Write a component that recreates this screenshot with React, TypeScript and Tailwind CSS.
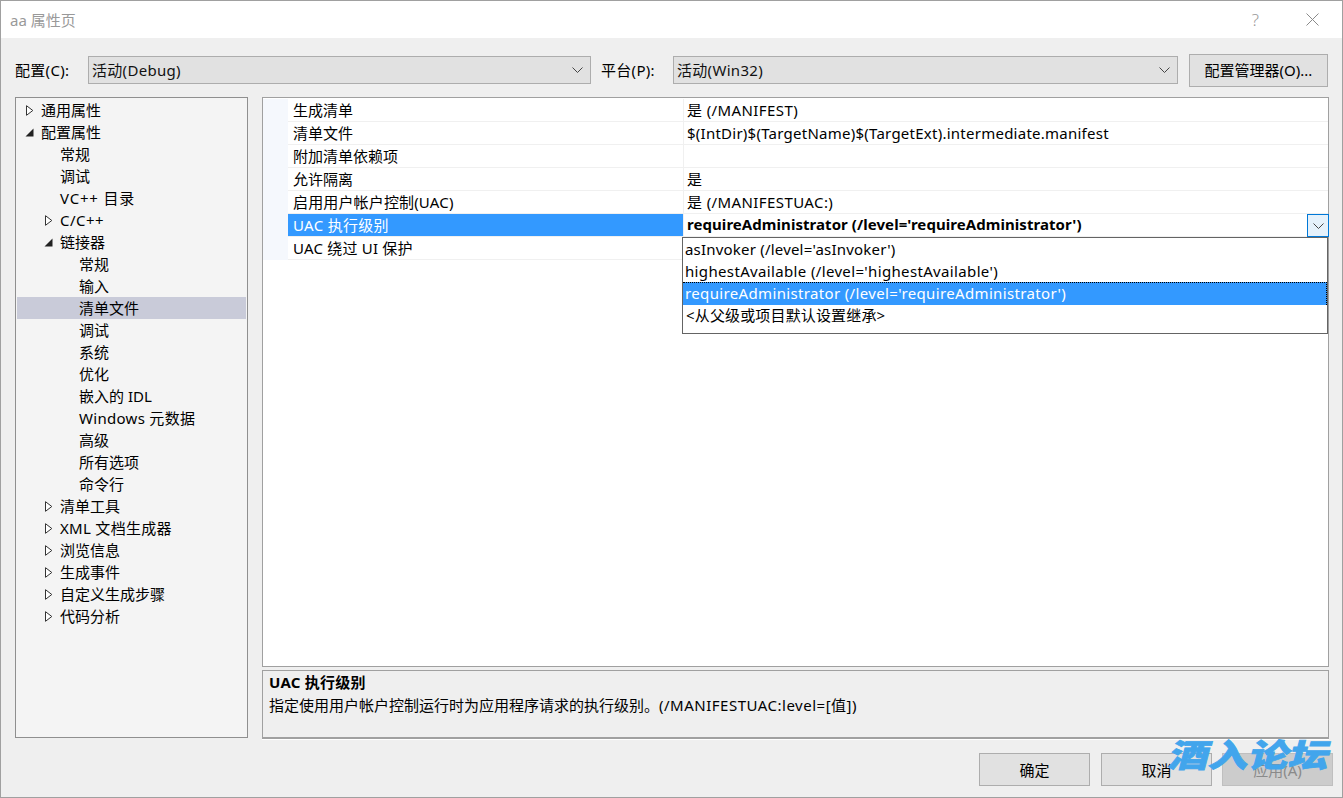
const FONT = "font-['Noto_Sans','Noto_Sans_CJK_SC',sans-serif]";

type TreeNode = { label: string; level: number; arrow?: "open" | "closed"; selected?: boolean; track?: string };

const tree: TreeNode[] = [
  { label: "通用属性", level: 0, arrow: "closed" },
  { label: "配置属性", level: 0, arrow: "open" },
  { label: "常规", level: 1 },
  { label: "调试", level: 1 },
  { label: "VC++ 目录", level: 1, track: "tracking-[0.8px]" },
  { label: "C/C++", level: 1, arrow: "closed", track: "tracking-[0.5px]" },
  { label: "链接器", level: 1, arrow: "open" },
  { label: "常规", level: 2 },
  { label: "输入", level: 2 },
  { label: "清单文件", level: 2, selected: true },
  { label: "调试", level: 2 },
  { label: "系统", level: 2 },
  { label: "优化", level: 2 },
  { label: "嵌入的 IDL", level: 2 },
  { label: "Windows 元数据", level: 2, track: "tracking-[0.3px]" },
  { label: "高级", level: 2 },
  { label: "所有选项", level: 2 },
  { label: "命令行", level: 2 },
  { label: "清单工具", level: 1, arrow: "closed" },
  { label: "XML 文档生成器", level: 1, arrow: "closed", track: "tracking-[0.3px]" },
  { label: "浏览信息", level: 1, arrow: "closed" },
  { label: "生成事件", level: 1, arrow: "closed" },
  { label: "自定义生成步骤", level: 1, arrow: "closed" },
  { label: "代码分析", level: 1, arrow: "closed" },
];

const props = [
  { name: "生成清单", value: "是 (/MANIFEST)", track: "tracking-[0.4px]" },
  { name: "清单文件", value: "$(IntDir)$(TargetName)$(TargetExt).intermediate.manifest", track: "tracking-[0.25px]" },
  { name: "附加清单依赖项", value: "" },
  { name: "允许隔离", value: "是" },
  { name: "启用用户帐户控制(UAC)", value: "是 (/MANIFESTUAC:)", track: "tracking-[0.4px]", nameTrack: "tracking-[0.15px]" },
  { name: "UAC 执行级别", value: "requireAdministrator (/level='requireAdministrator')", selected: true, track: "tracking-[0.06px]", nameTrack: "tracking-[0.3px]" },
  { name: "UAC 绕过 UI 保护", value: "", nameTrack: "tracking-[0.2px]" },
];

function Chevron({ className }: { className?: string }) {
  return (
    <svg width="11" height="6" viewBox="0 0 11 6" fill="none" className={className}>
      <path d="M0.5 0.5 L5.5 5.5 L10.5 0.5" stroke="#444" strokeWidth="1" />
    </svg>
  );
}

function TreeArrow({ kind }: { kind: "open" | "closed" }) {
  if (kind === "closed") {
    return (
      <svg width="8" height="11" viewBox="0 0 8 11" fill="none">
        <path d="M0.5 0.7 L6.8 5.5 L0.5 10.3 Z" stroke="#333" strokeWidth="1" fill="#fff" />
      </svg>
    );
  }
  return (
    <svg width="9" height="9" viewBox="0 0 9 9">
      <path d="M8.5 0.5 V8.5 H0.5 Z" fill="#222" />
    </svg>
  );
}

function Combo({ text, className }: { text: string; className: string }) {
  return (
    <div className={`h-[28px] flex items-center justify-between border border-[#adadad] bg-[#e1e1e1] pl-[3px] pr-[7px] text-[15px] text-[#111] ${className}`}>
      <span className="tracking-[0.3px]">{text}</span>
      <Chevron />
    </div>
  );
}

function DialogButton({ label, disabled, className }: { label: string; disabled?: boolean; className?: string }) {
  return (
    <div
      className={`w-[111px] h-[33px] flex items-center justify-center border text-[15px] ${
        disabled ? "border-[#bfbfbf] bg-[#cccccc] text-[#8a8a8a]" : "border-[#adadad] bg-[#e1e1e1] text-black"
      } ${className ?? ""}`}
    >
      {label}
    </div>
  );
}

export default function App() {
  return (
    <div className={`${FONT} relative w-[1343px] h-[798px] flex flex-col border border-[#a0a0a0] bg-[#efefef] text-[15px] leading-[22px] text-black overflow-hidden`}>
      {/* Title bar */}
      <div className="h-[37px] shrink-0 bg-white flex items-center justify-between pl-[9px] pr-[23px]">
        <span className="text-[#999999]">aa 属性页</span>
        <div className="flex items-center gap-[47px]">
          <span className="text-[#999999] text-[17px] font-light">?</span>
          <svg width="13" height="13" viewBox="0 0 13 13">
            <path d="M0.5 0.5 L12.5 12.5 M12.5 0.5 L0.5 12.5" stroke="#8a8a8a" strokeWidth="1" />
          </svg>
        </div>
      </div>

      {/* Config row */}
      <div className="h-[59px] shrink-0 flex items-center pt-[5px] pl-[14px] pr-[14px]">
        <span className="w-[73px] tracking-[0.3px]">配置(C):</span>
        <Combo text="活动(Debug)" className="w-[503px]" />
        <span className="ml-[10px] w-[72px] tracking-[0.3px]">平台(P):</span>
        <Combo text="活动(Win32)" className="w-[505px]" />
        <div className="ml-[11px] w-[139px] h-[33px] flex items-center justify-center border border-[#adadad] bg-[#e1e1e1]">
          配置管理器(O)...
        </div>
      </div>

      {/* Main panes */}
      <div className="flex pl-[14px] gap-[14px]">
        <div className="w-[233px] h-[641px] shrink-0 border border-[#8f8f8f] bg-[#f4f4f4] pt-[1px] px-[1px]">
          {tree.map((n, i) => (
            <div key={i} className={`relative h-[22px] flex items-center ${n.selected ? "bg-[#c9cbd9]" : ""}`}>
              {n.arrow && (
                <span
                  className={`absolute top-0 h-[22px] flex items-center ${
                    n.level === 0 ? (n.arrow === "open" ? "left-[8px]" : "left-[9px]") : n.arrow === "open" ? "left-[27px]" : "left-[28px]"
                  }`}
                >
                  <TreeArrow kind={n.arrow} />
                </span>
              )}
              <span className={`${n.level === 0 ? "ml-[24px]" : n.level === 1 ? "ml-[43px]" : "ml-[62px]"} ${n.track ?? ""}`}>{n.label}</span>
            </div>
          ))}
        </div>

        <div className="w-[1067px] flex flex-col">
          <div className="relative h-[570px] border border-[#a0a0a0] bg-white pt-[1px]">
            {props.map((p, i) => (
              <div key={i} className="flex">
                <div className="w-[25px] shrink-0 bg-[#f5f8fd]" />
                <div className="flex-1 flex h-[23px] border-b border-[#f0f0f0]">
                  <div className={`w-[395px] shrink-0 pl-[5px] h-[22px] ${p.nameTrack ?? ""} ${p.selected ? "bg-[#3399ff] text-white" : ""}`}>
                    {p.name}
                  </div>
                  <div className={`flex-1 border-l border-[#f0f0f0] pl-[3px] h-[22px] ${p.track ?? ""} ${p.selected ? "font-bold leading-[20px]" : ""}`}>
                    {p.value}
                  </div>
                </div>
              </div>
            ))}

            {/* Open dropdown */}
            <div className="absolute left-[1044px] top-[116px] w-[22px] h-[23px] border border-[#0078d7] bg-[#e5f1fb] flex items-center justify-center">
              <Chevron />
            </div>
            <div className="absolute left-[419px] top-[139px] w-[646px] h-[97px] border border-[#646464] bg-white">
              <div className="h-[22px] pl-[2px] tracking-[0.2px]">asInvoker (/level='asInvoker')</div>
              <div className="h-[22px] pl-[2px] tracking-[0.35px]">highestAvailable (/level='highestAvailable')</div>
              <div className="h-[23px] pl-[2px] leading-[20px] bg-[#3399ff] text-white border-t border-r border-dotted border-black tracking-[0.35px]">
                requireAdministrator (/level='requireAdministrator')
              </div>
              <div className="h-[22px] pl-[3px] leading-[20px] tracking-[0.15px]">&lt;从父级或项目默认设置继承&gt;</div>
            </div>
          </div>

          <div className="mt-[3px] h-[69px] border border-b-2 border-[#a0a0a0] bg-[#efefef] pl-[6px] shadow-[0_1px_0_#ffffff]">
            <div className="font-bold tracking-[0.25px]">UAC 执行级别</div>
            <div className="mt-[1px]">
              指定使用用户帐户控制运行时为应用程序请求的执行级别。
              <span className="tracking-[0.5px]">(/MANIFESTUAC:level=[值])</span>
            </div>
          </div>
        </div>
      </div>

      {/* Dialog buttons */}
      <div className="mt-[14px] flex justify-end gap-[10px] pr-[9px]">
        <DialogButton label="确定" className="mr-[1px]" />
        <DialogButton label="取消" />
        <DialogButton label="应用(A)" disabled />
      </div>

      {/* Forum watermark */}
      <div className="absolute left-[1175px] top-[733px] origin-top-left scale-y-[0.8] -skew-x-[12deg] font-['Noto_Sans_CJK_SC',sans-serif] font-black text-[40px] leading-[48px] text-[#42a5ec] [-webkit-text-stroke:1px_#42a5ec] whitespace-nowrap">
        酒入论坛
      </div>
    </div>
  );
}
